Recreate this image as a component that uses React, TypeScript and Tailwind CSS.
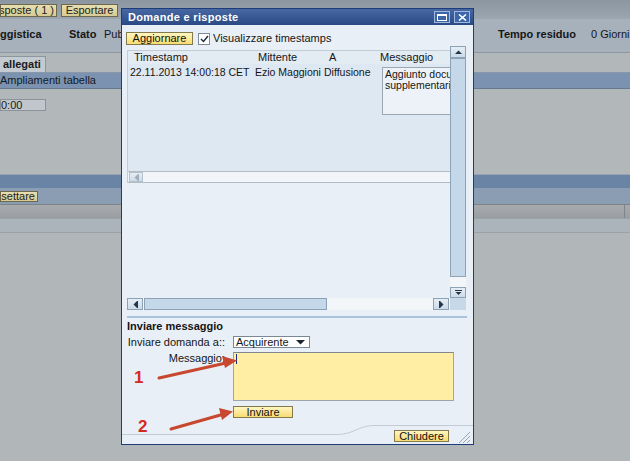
import React from "react";

type Dir = "up" | "down" | "left" | "right";

function ScrollArrow({ dir, faded = false }: { dir: Dir; faded?: boolean }) {
  const fill = faded ? "#a3adb8" : "#24364a";
  if (dir === "up")
    return (
      <svg width="9" height="7" viewBox="0 0 9 7">
        <polygon points="1,5 8,5 4.5,1.5" fill={fill} />
      </svg>
    );
  if (dir === "down")
    return (
      <svg width="9" height="7" viewBox="0 0 9 7">
        <rect x="1" y="1" width="7" height="1" fill={fill} />
        <polygon points="1.5,3 7.5,3 4.5,6" fill={fill} />
      </svg>
    );
  if (dir === "left")
    return (
      <svg width="7" height="9" viewBox="0 0 7 9">
        <rect x="5" y="1" width="1" height="7" fill={fill} />
        <polygon points="5,1 5,8 1.5,4.5" fill={fill} />
      </svg>
    );
  return (
    <svg width="7" height="9" viewBox="0 0 7 9">
      <rect x="1" y="1" width="1" height="7" fill={fill} />
      <polygon points="2,1 2,8 5.5,4.5" fill={fill} />
    </svg>
  );
}

function ScrollBtn({ dir, className = "", faded = false }: { dir: Dir; className?: string; faded?: boolean }) {
  return (
    <div
      className={`flex items-center justify-center border bg-gradient-to-b from-[#e6eef5] to-[#ccdbe9] ${
        faded ? "border-[#b4c0cb]" : "border-[#8ea2b5]"
      } ${className}`}
    >
      <ScrollArrow dir={dir} faded={faded} />
    </div>
  );
}

function TanButton({ children, className = "" }: { children: React.ReactNode; className?: string }) {
  return (
    <div
      className={`flex items-center overflow-hidden whitespace-nowrap border border-[#6d684d] bg-gradient-to-b from-[#e7dfb0] to-[#d7cc93] text-[11px] leading-none text-[#222] ${className}`}
    >
      {children}
    </div>
  );
}

function YellowButton({ children, className = "" }: { children: React.ReactNode; className?: string }) {
  return (
    <div
      className={`flex items-center justify-center whitespace-nowrap border border-[#857a4e] bg-gradient-to-b from-[#fff6c0] to-[#f8dc6e] text-[11px] leading-none text-[#111] ${className}`}
    >
      {children}
    </div>
  );
}

function BackgroundPage() {
  return (
    <div className="flex flex-col">
      {/* toolbar */}
      <div className="h-[19px] bg-gradient-to-b from-[#8b96a1] to-[#9ba6b1] pt-[4px] flex items-start gap-[4px]">
        <TanButton className="w-[57px] h-[13px] justify-end pr-[2px]">
          <span className="shrink-0">sposte ( 1 )</span>
        </TanButton>
        <TanButton className="w-[57px] h-[13px] justify-center">Esportare</TanButton>
      </div>
      {/* header */}
      <div className="h-[33px] pb-[3px] bg-[#a6b1bc] flex items-center whitespace-nowrap text-[11px] text-[#161616]">
        <span className="w-[69px] font-bold">ggistica</span>
        <span className="w-[35px] font-bold">Stato</span>
        <span className="w-[17px] overflow-hidden">Pub</span>
        <span className="w-[377px]" />
        <span className="w-[93px] font-bold">Tempo residuo</span>
        <span>0 Giorni</span>
      </div>
      <div className="h-px bg-[#8d97a1]" />
      {/* tabs */}
      <div className="h-[19px] bg-[#b2b7ba] flex items-end">
        <div className="w-[46px] h-[16px] bg-[#c3cad0] border-t border-r border-[#8c96a0] flex items-center pl-[3px] font-bold text-[11px] text-[#1a1a1a]">
          allegati
        </div>
      </div>
      <div className="h-px bg-[#8898aa]" />
      <div className="h-[15px] bg-[#7b93b0] flex items-center text-[11px] text-[#151a22]">Ampliamenti tabella</div>
      <div className="h-px bg-[#66798f]" />
      {/* gray content */}
      <div className="h-[85px] bg-[#b2b7ba] pt-[10px]">
        <div className="w-[46px] h-[12px] bg-[#c0c6cb] border border-[#8b939a] flex items-center text-[11px] leading-none text-[#1a1a1a]">
          0:00
        </div>
      </div>
      <div className="h-px bg-[#9aa3ad]" />
      <div className="h-[13px] bg-[#6a84a6]" />
      <div className="h-[16px] bg-[#8a9db2] pt-[3px]">
        <TanButton className="w-[38px] h-[11px] justify-end pr-[2px]">settare</TanButton>
      </div>
      <div className="h-px bg-[#7c8389]" />
      <div className="h-[13px] bg-gradient-to-b from-[#a7abae] to-[#9a9ea2] flex justify-end">
        <div className="w-px h-full bg-[#7d848a] mr-[5px]" />
      </div>
      <div className="h-px bg-[#9ba2a8]" />
      <div className="h-[13px] bg-[#abb3bb]" />
      <div className="h-px bg-[#9aa1a7]" />
    </div>
  );
}

function Dialog() {
  return (
    <div className="absolute left-[121px] top-[8px] w-[353px] h-[437px] border border-[#1e3c78] bg-[#e9eff6] flex flex-col text-[11px] text-[#151515]">
      {/* title bar */}
      <div className="h-[16px] shrink-0 bg-gradient-to-b from-[#4868a3] to-[#2a4a86] flex items-center justify-between pl-[6px] pr-[3px]">
        <span className="text-white font-bold tracking-[0.3px] leading-none">Domande e risposte</span>
        <div className="flex gap-[4px]">
          <div className="w-[16px] h-[12px] border border-[#9fb8dc] bg-[#3b66aa] flex items-center justify-center">
            <div className="w-[10px] h-[7px] border border-white border-t-2" />
          </div>
          <div className="w-[16px] h-[12px] border border-[#9fb8dc] bg-[#3b66aa] flex items-center justify-center">
            <svg width="9" height="7" viewBox="0 0 9 7">
              <path d="M1 0.5 L8 6.5 M8 0.5 L1 6.5" stroke="white" strokeWidth="1.6" />
            </svg>
          </div>
        </div>
      </div>

      {/* toolbar */}
      <div className="mt-[7px] pl-[4px] h-[13px] flex items-center">
        <YellowButton className="w-[67px] h-[13px]">Aggiornare</YellowButton>
        <div className="ml-[5px] w-[12px] h-[12px] bg-white border border-[#7f8b97] flex items-center justify-center">
          <svg width="9" height="8" viewBox="0 0 9 8">
            <path d="M1 4 L3.5 6.5 L8 1" stroke="#1b2a3a" strokeWidth="1.4" fill="none" />
          </svg>
        </div>
        <span className="ml-[3px] leading-none">Visualizzare timestamps</span>
      </div>

      {/* table with scrollbars */}
      <div className="mt-px ml-[5px] w-[339px] h-[264px] grid grid-cols-[323px_16px] grid-rows-[252px_12px]">
        <div className="pt-[4px] overflow-hidden">
          <div className="border-l border-t border-[#c2ccd5]">
            <div className="h-[13px] bg-[#e4ecf3] flex items-center leading-none whitespace-nowrap">
              <span className="w-[124px] pl-[6px]">Timestamp</span>
              <span className="w-[72px] pl-[6px]">Mittente</span>
              <span className="w-[52px] pl-[5px]">A</span>
              <span className="pl-[4px]">Messaggio</span>
            </div>
            <div className="h-[107px] bg-[#dee8f2] flex items-start whitespace-nowrap text-[10.5px]">
              <span className="w-[124px] pl-[2px] pt-[2px] leading-[13px]">22.11.2013 14:00:18 CET</span>
              <span className="w-[72px] pl-[3px] pt-[2px] leading-[13px]">Ezio Maggioni</span>
              <span className="w-[55px] pt-[2px] leading-[13px]">Diffusione</span>
              <div className="flex-1 overflow-hidden pt-[3px] pl-[3px]">
                <div className="w-[68px] h-[48px] bg-[#edf2f8] border-l border-t border-b border-[#9ba7b2] pl-[2px] pt-px leading-[11px] overflow-hidden">
                  <div>Aggiunto docu</div>
                  <div>supplementari</div>
                </div>
              </div>
            </div>
            <div className="h-[12px] border-t border-b border-[#b3bbc3] bg-[#f1f5f9] pl-px flex items-center">
              <ScrollBtn dir="left" faded className="w-[14px] h-[10px]" />
            </div>
          </div>
        </div>
        {/* vertical scrollbar */}
        <div className="flex flex-col">
          <ScrollBtn dir="up" className="h-[12px]" />
          <div className="h-[219px] border border-[#8da2b6] bg-[#c4d8e9]" />
          <div className="h-[10px] bg-[#f3f6f9]" />
          <ScrollBtn dir="down" className="h-[11px]" />
        </div>
        {/* horizontal scrollbar */}
        <div className="flex bg-[#f3f6f9]">
          <ScrollBtn dir="left" className="w-[16px]" />
          <div className="ml-px w-[183px] border border-[#8da2b6] bg-[#c4d8e9]" />
          <div className="flex-1" />
          <ScrollBtn dir="right" className="w-[16px]" />
          <div className="w-px" />
        </div>
        <div className="bg-[#c7d9e9]" />
      </div>

      {/* divider */}
      <div className="mt-[6px] ml-[5px] w-[340px] h-[2px] bg-[#a8c3db] shrink-0" />

      <div className="mt-[2px] ml-[5px] h-[12px] flex items-center font-bold leading-none">Inviare messaggio</div>

      {/* form */}
      <div className="mt-[4px] ml-[5px] grid grid-cols-[98px_1fr] gap-x-[8px] gap-y-[4px] items-start">
        <div className="h-[12px] flex items-center justify-end leading-none whitespace-nowrap">Inviare domanda a::</div>
        <div className="w-[77px] h-[12px] bg-white border border-[#7a8896] flex items-center justify-between pl-[2px] pr-[4px] leading-none">
          <span>Acquirente</span>
          <svg width="9" height="5" viewBox="0 0 9 5">
            <polygon points="0,0 9,0 4.5,4.5" fill="#1c2733" />
          </svg>
        </div>
        <div className="h-[12px] flex items-center justify-end leading-none">Messaggio:</div>
        <div className="w-[221px] h-[49px] bg-[#ffeea4] border border-[#9ea5aa] border-t-[#7f878d] pl-[2px] pt-px">
          <div className="w-px h-[10px] bg-[#1a2a80]" />
        </div>
        <div />
        <YellowButton className="mt-px w-[60px] h-[12px]">Inviare</YellowButton>
      </div>

      {/* footer */}
      <div className="relative flex-1 flex items-end justify-end pr-[24px] pb-[2px]">
        <svg className="absolute left-0 bottom-[8px]" width="351" height="12" viewBox="0 0 351 12">
          <path d="M0 10.5 H215 C232 10.5 236 1.5 252 1.5 H351" stroke="#c2cbd4" strokeWidth="1" fill="none" />
        </svg>
        <YellowButton className="relative w-[55px] h-[12px]">Chiudere</YellowButton>
        <svg className="absolute right-[2px] bottom-px" width="14" height="12" viewBox="0 0 14 12">
          <path d="M13 1 L2 12 M13 5 L6 12 M13 9 L10 12" stroke="#9aa4ae" strokeWidth="1" />
        </svg>
      </div>
    </div>
  );
}

function Annotations() {
  return (
    <>
      <svg className="absolute left-0 top-0 pointer-events-none" width="630" height="461" viewBox="0 0 630 461">
        <line x1="159" y1="378" x2="226" y2="363" stroke="#c8472f" strokeWidth="3" strokeLinecap="round" />
        <polygon points="237,360.5 222,356 225,368" fill="#c8472f" />
        <line x1="171" y1="429" x2="224" y2="414" stroke="#c8472f" strokeWidth="3" strokeLinecap="round" />
        <polygon points="233,411.5 219,408 222,420" fill="#c8472f" />
      </svg>
      <span className="absolute left-[134px] top-[369px] text-[17px] font-bold leading-none text-[#d42a22]">1</span>
      <span className="absolute left-[138px] top-[418px] text-[17px] font-bold leading-none text-[#d42a22]">2</span>
    </>
  );
}

export default function App() {
  return (
    <div className="relative w-[630px] h-[461px] overflow-hidden bg-[#b1b6b9] text-[11px] font-['Liberation_Sans',Arial,sans-serif]">
      <BackgroundPage />
      <Dialog />
      <Annotations />
    </div>
  );
}
